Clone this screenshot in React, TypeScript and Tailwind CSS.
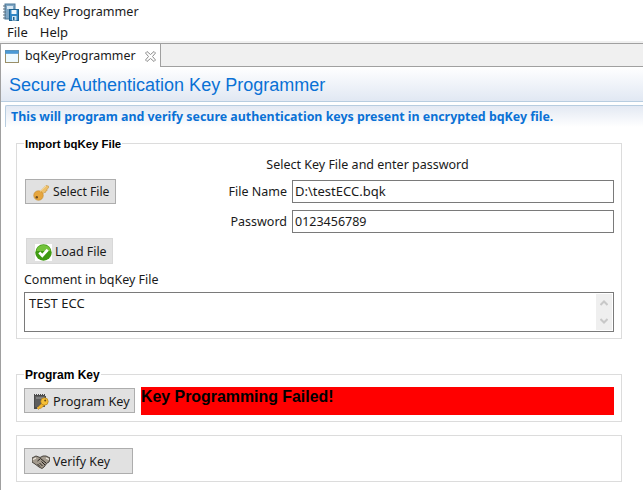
const ui = { fontFamily: '"Noto Sans", "Open Sans", sans-serif' };
const arial = { fontFamily: '"Liberation Sans", sans-serif' };

function AppIcon() {
  return (
    <svg width="17" height="18" viewBox="0 0 17 18" className="shrink-0">
      <rect x="3" y="1" width="10" height="15" fill="#7fa6c4" stroke="#4d7a9c" />
      <rect x="5" y="3" width="6" height="3" fill="#d9e8f3" />
      <path d="M1 3h3M1 6h3M1 9h3M1 12h3M1 15h3" stroke="#5f6f7d" strokeWidth="1.2" />
      <rect x="7.5" y="6.5" width="9" height="11" fill="#2f86c4" stroke="#1f628f" />
      <rect x="9.5" y="7" width="5" height="4" fill="#eef6fb" />
      <rect x="10" y="13" width="4.5" height="4.5" fill="#cfe4f2" />
      <rect x="11" y="14" width="1.5" height="3" fill="#1f628f" />
    </svg>
  );
}

function TabIcon() {
  return (
    <svg width="14" height="13" viewBox="0 0 14 13" className="shrink-0">
      <rect x="0.5" y="0.5" width="13" height="12" fill="#eefaff" stroke="#9a8f68" />
      <rect x="0.5" y="0.5" width="13" height="3" fill="#4a9ad6" stroke="#4a8fc8" strokeWidth="0.6" />
    </svg>
  );
}

function CloseIcon() {
  return (
    <svg width="11" height="11" viewBox="0 0 11 11" className="shrink-0">
      <path d="M.5 2 2 .5 5.5 3.5 9 .5 10.5 2 7.5 5.5 10.5 9 9 10.5 5.5 7.5 2 10.5.5 9 3.5 5.5Z" fill="#fff" stroke="#8c8c8c" strokeWidth="1" />
    </svg>
  );
}

function KeyIcon() {
  return (
    <svg width="16" height="16" viewBox="0 0 16 16" className="shrink-0">
      <path d="M15.5 1 13 .5 6.5 7 9 9.5 11 7.5 12.5 7.5 12.5 6 14 6 14 4 15.5 3Z" fill="#eec06a" stroke="#c08f38" strokeWidth="0.5" />
      <circle cx="5.5" cy="10.5" r="4.8" fill="#e6a63e" stroke="#bd8428" strokeWidth="0.5" />
      <circle cx="3.8" cy="12.2" r="1.2" fill="#6e4b1d" />
      <path d="M7 6.5 13 1" stroke="#fbe3ad" strokeWidth="0.8" />
    </svg>
  );
}

function CheckIcon() {
  return (
    <svg width="17" height="17" viewBox="0 0 17 17" className="shrink-0">
      <rect width="17" height="17" fill="#fff" />
      <circle cx="8.5" cy="8.5" r="8.2" fill="#3f9a12" />
      <path d="M1.5 7a7 6 0 0 1 14 0z" fill="#86d04a" opacity="0.75" />
      <path d="M4.3 8.5 7.3 11.6 12.7 5.8" fill="none" stroke="#fff" strokeWidth="2.8" />
    </svg>
  );
}

function ChipKeyIcon() {
  return (
    <svg width="16" height="16" viewBox="0 0 16 16" className="shrink-0">
      <path d="M1 2V0h1v1h1V0h1v1h1V0h1v1h1V0h1v1h1V0h1v1h1V0h1v2h1v6H3v5h1v2H1Z" fill="#4a4a4a" />
      <rect x="2" y="2" width="10" height="11" fill="#5e5e5e" />
      <path d="M3 3h8v2H3z" fill="#808080" />
      <path d="M9.5 8.5 4 14 5.5 15.5 7 14 8 14.5 11 11.5Z" fill="#f2b630" stroke="#a87614" strokeWidth="0.5" />
      <circle cx="11.5" cy="7.5" r="3.7" fill="#f5c038" stroke="#a87614" strokeWidth="0.6" />
      <circle cx="12.2" cy="6.6" r="1" fill="#6a4a10" />
    </svg>
  );
}

function HandshakeIcon() {
  return (
    <svg width="18" height="14" viewBox="0 0 18 14" className="shrink-0">
      <path d="M0 3 4 1 8 2.5 11 1 14 1 18 3 17 7 15 8 12 12 10 13.5 7 12 3 9 0 7Z" fill="#a39a8d" stroke="#3a3630" strokeWidth="0.9" />
      <path d="M5.5 6 8.5 3.5 14 8M5.5 9l2.5 2.5M7.5 8l3 3M9.5 6.5l3.5 3.5" fill="none" stroke="#26221e" strokeWidth="1" />
      <path d="M1 4.5 4 3M17 4.5 14 3" stroke="#efeae1" strokeWidth="1.2" />
    </svg>
  );
}

function Button({ icon, label, className = "" }: { icon: React.ReactNode; label: string; className?: string }) {
  return (
    <button className={"flex items-center pt-[2px] bg-[#e1e1e1] border border-[#adadad] text-[#1a1a1a] " + className} style={ui}>
      {icon}
      <span className="whitespace-nowrap">{label}</span>
    </button>
  );
}

function TextField({ value, className = "" }: { value: string; className?: string }) {
  return (
    <div className={"h-[23px] flex-1 flex items-center border border-[#7a7a7a] px-[2px] pt-[1px] text-[#1a1a1a] bg-white " + className} style={ui}>
      {value}
    </div>
  );
}

function Chevron({ d }: { d: string }) {
  return (
    <svg width="8" height="6" viewBox="0 0 8 6">
      <path d={d} fill="none" stroke="#c8c8c8" strokeWidth="2" />
    </svg>
  );
}

function Group({ title, titleClass = "text-[12px]", className, children }: { title?: string; titleClass?: string; className: string; children: React.ReactNode }) {
  return (
    <section className={"relative ml-[15px] mr-[21px] border border-[#dcdcdc] shrink-0 " + className}>
      {title && (
        <span className={"absolute left-[7px] top-[-7px] bg-white px-[1px] leading-[14px] font-bold text-black " + titleClass} style={arial}>
          {title}
        </span>
      )}
      {children}
    </section>
  );
}

export default function App() {
  return (
    <div className="w-[643px] h-[490px] overflow-hidden bg-white flex flex-col" style={ui}>
      <div className="h-[22px] pt-[2px] flex items-center gap-[4px] pl-[2px] text-[12.6px] text-[#1a1a1a]">
        <AppIcon />
        <span>bqKey Programmer</span>
      </div>
      <div className="h-[19px] pt-[3px] flex items-center gap-[12px] pl-[7px] text-[13px] text-[#1a1a1a]">
        <span>File</span>
        <span>Help</span>
      </div>
      <div className="h-[2px] bg-[#f0f0f0]" />
      <div className="flex-1 flex flex-col border-l border-[#a0a0a0] min-h-0">
        <div className="h-[24px] -ml-[1px] flex bg-[#f0f0f0] border-t border-b border-[#a0a0a0] shrink-0">
          <div className="w-[161px] h-[24px] -mt-[1px] pt-[2px] flex items-center pl-[4px] bg-white border-t border-l border-r border-[#a0a0a0] rounded-tl-[2px] text-[12.4px] text-[#1a1a1a]">
            <TabIcon />
            <span className="ml-[6px] mr-[9px]">bqKeyProgrammer</span>
            <CloseIcon />
          </div>
        </div>
        <div className="h-[35px] pt-[3px] flex items-center pl-[8px] bg-gradient-to-b from-white to-[#e1e8f3] border-b border-[#b7cde0] text-[18px] text-[#0a71d5] shrink-0" style={arial}>
          Secure Authentication Key Programmer
        </div>
        <div className="h-[22px] mt-[3px] ml-[4px] pt-[2px] flex items-center pl-[5px] bg-gradient-to-b from-[#e3e9f3] to-white border-t border-l border-[#b7cde0] rounded-tl-[2px] text-[12.4px] font-bold text-[#0a71d5] shrink-0">
          This will program and verify secure authentication keys present in encrypted bqKey file.
        </div>
        <Group title="Import bqKey File" titleClass="text-[11.4px]" className="mt-[16px] h-[196px] px-[7px]">
          <div className="pt-[12px] pl-[99px] text-center text-[12.5px] leading-[18px] text-[#1a1a1a] pr-[2px]">Select Key File and enter password</div>
          <div className="flex mt-[5px]">
            <div className="w-[115px] flex flex-col">
              <Button icon={<KeyIcon />} label="Select File" className="w-[91px] h-[25px] pl-[7px] gap-[4px] ml-[1px] text-[12.2px]" />
              <Button icon={<CheckIcon />} label="Load File" className="w-[87px] h-[26px] pl-[8px] gap-[3px] ml-[2px] mt-[34px] border-[#d8d8d8] text-[12.4px]" />
            </div>
            <div className="flex-1 flex flex-col gap-[7px] pt-[1px] pl-[4px] -ml-[4px]">
              <div className="flex items-center gap-[5px]">
                <span className="w-[148px] pt-[2px] text-right text-[12.5px] text-[#1a1a1a]">File Name</span>
                <TextField value="D:\testECC.bqk" className="text-[13px]" />
              </div>
              <div className="flex items-center gap-[5px]">
                <span className="w-[148px] pt-[2px] text-right text-[12.5px] text-[#1a1a1a]">Password</span>
                <TextField value="0123456789" className="text-[12.5px]" />
              </div>
            </div>
          </div>
          <div className="mt-[6px] pt-[1px] h-[18px] text-[12.45px] leading-[18px] text-[#1a1a1a]">Comment in bqKey File</div>
          <div className="mt-[4px] h-[40px] border border-[#7a7a7a] flex justify-between text-[13px] leading-[18px] text-[#1a1a1a]">
            <span className="pl-[4px] pt-[1px]">TEST ECC</span>
            <div className="w-[16px] my-[1px] mr-[1px] bg-[#efefef] flex flex-col items-center justify-around">
              <Chevron d="M0.5 5 4 1.5 7.5 5" />
              <Chevron d="M0.5 1 4 4.5 7.5 1" />
            </div>
          </div>
        </Group>
        <Group title="Program Key" className="mt-[35px] h-[48px] pt-[12px] px-[7px] flex gap-[6px]">
          <Button icon={<ChipKeyIcon />} label="Program Key" className="w-[111px] h-[25px] pl-[8px] gap-[4px] mt-[1px] shrink-0 text-[12.7px]" />
          <div className="flex-1 h-[28px] pt-[1px] bg-[#ff0000] text-[15.9px] leading-[18px] font-bold text-black" style={arial}>
            Key Programming Failed!
          </div>
        </Group>
        <Group className="mt-[13px] h-[47px] pt-[12px] pl-[7px]">
          <Button icon={<HandshakeIcon />} label="Verify Key" className="w-[109px] h-[26px] pl-[7px] gap-[3px] text-[12.4px]" />
        </Group>
      </div>
    </div>
  );
}
